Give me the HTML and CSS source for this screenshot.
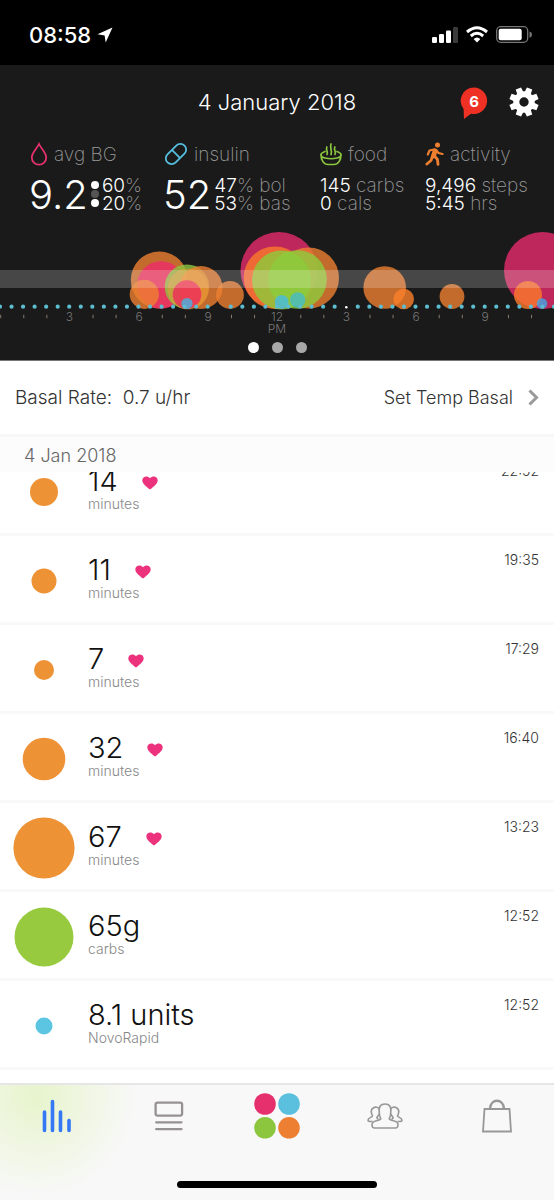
FILE: index.html
```html
<!DOCTYPE html>
<html lang="en">
<head>
<meta charset="utf-8">
<meta name="viewport" content="width=device-width, initial-scale=1">
<title>Diary</title>
<link rel="stylesheet" href="styles.css">
</head>
<body>
<div class="app">
  <div class="status">
    <div class="status-time">08:58
      <svg width="16" height="16" viewBox="0 0 16 16"><path d="M15.500.500L.5 7.300L7.600 8.400L8.700 15.500Z" fill="#fff"/></svg>
    </div>
    <div class="status-icons">
      <svg width="26" height="17" viewBox="0 0 26 17" fill="#fff"><rect x="0" y="11" width="5" height="6" rx="1.300"/><rect x="7" y="8" width="5" height="9" rx="1.300"/><rect x="14" y="4.500" width="5" height="12.500" rx="1.300"/><rect x="21" y="1" width="5" height="16" rx="1.300" fill="#3a3a3a"/></svg>
      <svg width="22" height="17" viewBox="0 0 22 17" fill="none" stroke="#fff" stroke-width="3"><path d="M1 6Q11-2.500 21 6"/><path d="M4.800 10Q11 4.600 17.200 10"/><path d="M11 16.500L7.600 13Q11 10 14.400 13Z" fill="#fff" stroke="none"/></svg>
      <svg width="36" height="17" viewBox="0 0 36 17"><rect x=".7" y=".7" width="31" height="15.600" rx="4" fill="none" stroke="#777" stroke-width="1.300"/><rect x="2.700" y="2.700" width="23" height="11.600" rx="2" fill="#fff"/><path d="M33.500 5.500Q36 6 36 8.500Q36 11 33.500 11.500Z" fill="#777"/></svg>
    </div>
  </div>

  <header class="summary">
    <div class="title-bar">
      <h1>4 January 2018</h1>
      <div class="actions">
        <button class="icon-button alerts" aria-label="6 alerts">
          <svg width="28" height="32" viewBox="0 0 28 32"><path d="M14 .5A13.300 13.300 0 1 1 11 26.800L4 32L3.600 22A13.300 13.300 0 0 1 14 .5Z" fill="#ee3124"/></svg>
          <span>6</span>
        </button>
        <button class="icon-button" aria-label="Settings">
          <svg width="30" height="30" viewBox="-15 -15 30 30"><g fill="#fff"><path id="t" d="M-3.300-9L-2.900-14.600H2.900L3.300-9Z" transform="rotate(22.500)"/><use href="#t" transform="rotate(45)"/><use href="#t" transform="rotate(90)"/><use href="#t" transform="rotate(135)"/><use href="#t" transform="rotate(180)"/><use href="#t" transform="rotate(225)"/><use href="#t" transform="rotate(270)"/><use href="#t" transform="rotate(315)"/></g><circle r="7.700" fill="none" stroke="#fff" stroke-width="6"/></svg>
        </button>
      </div>
    </div>

    <div class="stats">
      <section>
        <h2><svg width="18" height="24" viewBox="0 0 18 24"><path d="M9 2C7 6.500 1.800 10.500 1.800 15.500A7.200 7.200 0 0 0 16.200 15.500C16.200 10.500 11 6.500 9 2Z" fill="none" stroke="#e6306e" stroke-width="1.800"/></svg>avg BG</h2>
        <div class="figures">
          <strong>9.2</strong>
          <svg class="range" width="8" height="26" viewBox="0 0 8 26"><circle cx="4" cy="4" r="4" fill="#fff"/><circle cx="4" cy="13" r="4" fill="#555"/><circle cx="4" cy="22" r="4" fill="#fff"/></svg>
          <p><b>60</b>%<br><b>20</b>%</p>
        </div>
      </section>
      <section>
        <h2><svg width="24" height="24" viewBox="0 0 24 24" fill="none" stroke="#55bfdf" stroke-width="1.800"><g transform="rotate(-45 12 12)"><rect x="0" y="6.200" width="24" height="11.600" rx="5.800"/><path d="M12 6.200V17.800"/></g></svg>insulin</h2>
        <div class="figures">
          <strong>52</strong>
          <p><b>47</b>% bol<br><b>53</b>% bas</p>
        </div>
      </section>
      <section>
        <h2><svg width="22" height="24" viewBox="0 0 22 24" fill="none" stroke="#8cc63f" stroke-width="1.700" stroke-linecap="round"><path d="M5 9.500C-.5 11.500-.5 14.500 5 16C9 17 13 17 17 16C22.500 14.500 22.500 11.500 17 9.500M1.100 13C.8 18 4 22.500 8 22.500H14C18 22.500 21.200 18 20.900 13M7 12.500C8.500 10 5.500 8 6.800 5M11 12.500C12.800 9 9.300 6 11 2M15 12.500C16.500 10 13.500 8 14.800 5"/></svg>food</h2>
        <p><b>145</b> carbs<br><b>0</b> cals</p>
      </section>
      <section>
        <h2><svg width="19" height="24" viewBox="0 0 19 24" fill="none" stroke="#ee7f31" stroke-linecap="round" stroke-linejoin="round"><circle cx="12.500" cy="3" r="2.500" fill="#ee7f31" stroke="none"/><path d="M10 8.800L8.500 14" stroke-width="4.800"/><path d="M9 7.500L4.500 8.500L2.800 12.500M11.500 8.500L13.500 11L17.500 12" stroke-width="2.200"/><path d="M9.500 14L12.500 17.500L13 22.300M7.500 14L6 18.500L1.900 22" stroke-width="2.800"/></svg>activity</h2>
        <p><b>9,496</b> steps<br><b>5:45</b> hrs</p>
      </section>
    </div>

    <svg class="chart" viewBox="0 0 554 110" role="img" aria-label="Events over the day">
      <g fill-opacity=".8">
        <circle cx="159.300" cy="55" r="28.500" fill="#ee7f31"/>
        <circle cx="161" cy="60" r="23.800" fill="#ef2b6c"/>
        <circle cx="144.300" cy="69.300" r="14.600" fill="#ee7f31"/>
        <circle cx="187" cy="61.700" r="22.300" fill="#8cc63f"/>
        <circle cx="201" cy="62.500" r="21.500" fill="#ee7f31"/>
        <circle cx="188" cy="64" r="20.500" fill="#f29a37" fill-opacity=".45"/>
        <circle cx="187" cy="69.500" r="14.300" fill="#ef2b5c"/>
        <circle cx="187" cy="78.500" r="5.600" fill="#45b4e4"/>
        <circle cx="230" cy="70" r="13.900" fill="#ee7f31"/>
        <circle cx="279" cy="45.500" r="38.500" fill="#e62a6c"/>
        <circle cx="275" cy="52.700" r="31.300" fill="#fb7a2b"/>
        <circle cx="308.500" cy="53" r="30.500" fill="#ee7f31"/>
        <circle cx="281.500" cy="55" r="29.500" fill="#8ccc3c"/>
        <circle cx="297.500" cy="54.500" r="29.300" fill="#8ccc3c"/>
        <circle cx="281.700" cy="77" r="7" fill="#45bbe4"/>
        <circle cx="297.700" cy="75" r="7.700" fill="#45bbc8"/>
        <circle cx="384.700" cy="62.500" r="21.300" fill="#ee7f31"/>
        <circle cx="403.700" cy="74" r="10.300" fill="#fb7f2b"/>
        <circle cx="452" cy="71.500" r="12.400" fill="#ee7f31"/>
        <circle cx="542.500" cy="45.500" r="38.500" fill="#e62a6c"/>
        <circle cx="528" cy="70" r="14" fill="#fb7a2b"/>
        <circle cx="542" cy="78.500" r="5.300" fill="#45a4e4"/>
      </g>
      <rect y="45" width="554" height="18" fill="#fff" fill-opacity=".2"/>
      <g class="basal-dots"><path d="M0 81.700H208"/><path d="M230.800 81.700H336"/><path d="M357.800 81.700H554"/></g>
      <circle cx="346.300" cy="82.300" r="1.300" fill="#fff"/>
      <path d="M.2 91.500H554" stroke="#85796c" stroke-width="3.500" stroke-dasharray="1 22.080"/>
      <g fill="#1a1a1a"><rect x="62" y="86" width="14" height="11"/><rect x="131" y="86" width="14" height="11"/><rect x="200" y="86" width="14" height="11"/><rect x="269" y="86" width="16" height="11"/><rect x="339" y="86" width="14" height="11"/><rect x="408" y="86" width="14" height="11"/><rect x="477" y="86" width="14" height="11"/></g>
      <g class="hours"><text x="69.500" y="96">3</text><text x="139" y="96">6</text><text x="208" y="96">9</text><text x="277" y="96">12</text><text x="277" y="108">PM</text><text x="346.500" y="96">3</text><text x="416" y="96">6</text><text x="485" y="96">9</text></g>
    </svg>

    <nav class="pages" aria-label="Summary pages">
      <button class="current" aria-label="Page 1"></button><button aria-label="Page 2"></button><button aria-label="Page 3"></button>
    </nav>
  </header>

  <div class="basal">
    <span>Basal Rate:&nbsp; 0.7 u/hr</span>
    <button class="set-basal">Set Temp Basal
      <svg width="11" height="17" viewBox="0 0 11 17"><path d="M1.500 1.500L8.500 8.500L1.500 15.500" fill="none" stroke="#999" stroke-width="3"/></svg>
    </button>
  </div>
  <h3 class="day">4 Jan 2018</h3>

  <main class="feed">
    <ul>
      <li><span class="bubble"><svg width="62" height="62"><circle cx="31" cy="31" r="14"/></svg></span><div><p class="value">14 <svg class="heart" viewBox="0 0 16 14"><path d="M8 13.500C3 9.500.3 7.200.3 4.200C.3.300 5.500-1 8 2.200C10.500-1 15.700.300 15.700 4.200C15.700 7.200 13 9.500 8 13.500Z"/></svg></p><p class="unit">minutes</p></div><time>22:52</time></li>
      <li><span class="bubble"><svg width="62" height="62"><circle cx="31" cy="31" r="12.500"/></svg></span><div><p class="value">11 <svg class="heart" viewBox="0 0 16 14"><path d="M8 13.500C3 9.500.3 7.200.3 4.200C.3.300 5.500-1 8 2.200C10.500-1 15.700.300 15.700 4.200C15.700 7.200 13 9.500 8 13.500Z"/></svg></p><p class="unit">minutes</p></div><time>19:35</time></li>
      <li><span class="bubble"><svg width="62" height="62"><circle cx="31" cy="31" r="10"/></svg></span><div><p class="value">7 <svg class="heart" viewBox="0 0 16 14"><path d="M8 13.500C3 9.500.3 7.200.3 4.200C.3.300 5.500-1 8 2.200C10.500-1 15.700.300 15.700 4.200C15.700 7.200 13 9.500 8 13.500Z"/></svg></p><p class="unit">minutes</p></div><time>17:29</time></li>
      <li><span class="bubble"><svg width="62" height="62"><circle cx="31" cy="31" r="21.300"/></svg></span><div><p class="value">32 <svg class="heart" viewBox="0 0 16 14"><path d="M8 13.500C3 9.500.3 7.200.3 4.200C.3.300 5.500-1 8 2.200C10.500-1 15.700.300 15.700 4.200C15.700 7.200 13 9.500 8 13.500Z"/></svg></p><p class="unit">minutes</p></div><time>16:40</time></li>
      <li><span class="bubble"><svg width="62" height="62"><circle cx="31" cy="31" r="30.600"/></svg></span><div><p class="value">67 <svg class="heart" viewBox="0 0 16 14"><path d="M8 13.500C3 9.500.3 7.200.3 4.200C.3.300 5.500-1 8 2.200C10.500-1 15.700.300 15.700 4.200C15.700 7.200 13 9.500 8 13.500Z"/></svg></p><p class="unit">minutes</p></div><time>13:23</time></li>
      <li><span class="bubble carbs"><svg width="62" height="62"><circle cx="31" cy="31" r="29.500"/></svg></span><div><p class="value">65g</p><p class="unit">carbs</p></div><time>12:52</time></li>
      <li><span class="bubble dose"><svg width="62" height="62"><circle cx="31" cy="31" r="8.500"/></svg></span><div><p class="value">8.1 units</p><p class="unit">NovoRapid</p></div><time>12:52</time></li>
      <li><span class="bubble carbs"><svg width="62" height="62"><circle cx="31" cy="31" r="30.600"/></svg></span></li>
    </ul>
  </main>

  <footer class="tab-bar">
    <nav class="tabs" aria-label="Main">
      <button aria-label="Diary"><svg width="30" height="34" viewBox="0 0 30 34" stroke="#3478f6" stroke-width="3.600" stroke-linecap="round"><path d="M2.500 13V31.500M10.500 2.500V31.500M18.500 13V31.500M27 21.500V31.500"/></svg></button>
      <button aria-label="News"><svg width="30" height="30" viewBox="0 0 30 30" fill="none" stroke="#969192" stroke-width="2.300" stroke-linecap="round"><rect x="1.600" y="1.600" width="26.500" height="13" rx="2"/><path d="M2.200 21.300H27.500M2.200 28.200H27.500"/></svg></button>
      <button aria-label="Add entry"><svg width="46" height="46" viewBox="0 0 46 46"><circle cx="11" cy="11" r="10.800" fill="#e6306e"/><circle cx="35" cy="11" r="10.800" fill="#5bbfde"/><circle cx="11" cy="34.800" r="10.800" fill="#8cc63f"/><circle cx="35" cy="34.800" r="10.800" fill="#ed7f33"/></svg></button>
      <button aria-label="Community"><svg width="36" height="26" viewBox="0 0 36 26" fill="none" stroke="#989898" stroke-width="1.600" stroke-linejoin="round"><path d="M13.800 15.800C12.800 14 12.300 12 12.300 10C11.500 3.500 13.500 1 18 1S24.500 3.500 23.700 10C23.700 12 23.200 14 22.200 15.800C25 18.500 31 17 31 21.500C31 24.500 30 25 28.500 25H7.500C6 25 5 24.500 5 21.500C5 17 11 18.500 13.800 15.800Z"/><path d="M12.300 6.500C11.500 4 8.500 3.700 6.500 4.700C3.500 6.500 4 10 5.500 13C4.500 15 1 14.500 1 17.300Q1 19 5.500 18.300M11.300 16.500L9.800 14.700L12.300 11M23.700 6.500C24.500 4 27.500 3.700 29.500 4.700C32.500 6.500 32 10 30.500 13C31.500 15 35 14.500 35 17.300Q35 19 30.500 18.300M24.700 16.500L26.200 14.700L23.700 11"/></svg></button>
      <button aria-label="Shop"><svg width="30" height="34" viewBox="0 0 30 34" fill="none" stroke="#989898" stroke-width="1.800"><path d="M2.500 10H27.500L29 32.500H1Z"/><path d="M8 10C8.500-1 21.500-1 22 10" stroke-width="2.600"/></svg></button>
    </nav>
    <div class="home-indicator"></div>
  </footer>
</div>
</body>
</html>
```
FILE: styles.css
```css
* { box-sizing: border-box; }
body, h1, h2, h3, p, ul { margin: 0; padding: 0; }
body { font-family: Inter, "Liberation Sans", sans-serif; font-weight: 300; color: #333; background: #fff; }
button { border: 0; padding: 0; background: none; font: inherit; color: inherit; }
svg { display: block; flex: none; }

.app { display: flex; flex-direction: column; height: 100vh; overflow: hidden; }

.status { display: flex; justify-content: space-between; align-items: center; height: 65px; padding: 4px 22px 0 29px; background: #000; color: #fff; }
.status-time { display: flex; align-items: center; gap: 6px; font-size: 22px; font-weight: 500; }
.status-icons { display: flex; gap: 8px; }

.summary { display: flex; flex-direction: column; height: 296px; background: #1a1a1a; border-bottom: 1px solid #777; color: #999; }
.title-bar { display: grid; grid-template-columns: 1fr auto 1fr; align-items: center; padding: 20px 15px 0; }
.title-bar h1 { grid-column: 2; font-size: 22px; line-height: 34px; font-weight: 300; color: #fff; }
.actions { display: flex; justify-content: flex-end; align-items: center; gap: 21px; }
.alerts { display: grid; padding-top: 2px; }
.alerts > * { grid-area: 1 / 1; }
.alerts span { font-size: 15px; line-height: 30px; font-weight: 700; color: #fff; }

.stats { display: grid; grid-template-columns: 134fr 156fr 105fr 129fr; padding: 23px 0 0 30px; white-space: nowrap; }
.stats h2 { display: flex; align-items: center; gap: 6px; height: 24px; font-size: 19px; font-weight: 200; }
.stats p { padding-top: 11px; font-size: 19px; line-height: 18px; font-weight: 200; }
.stats b { font-weight: 300; color: #fff; }
.figures { display: flex; gap: 3px; }
.figures strong { margin-left: -1px; padding-top: 11px; font-size: 40px; line-height: 36px; font-weight: 300; color: #fff; }
.range { margin-top: 15px; }

.chart { width: 100%; height: auto; margin-top: 12px; }
.basal-dots { fill: none; stroke: #5cbcd0; stroke-width: 4.2px; stroke-linecap: round; stroke-dasharray: 0 11.54; }
.hours { fill: #777; font-size: 12px; text-anchor: middle; }
.pages { display: flex; justify-content: center; gap: 13px; padding-top: 7px; }
.pages button { width: 11px; height: 11px; border-radius: 50%; background: #a8a8a8; }
.pages .current { background: #fff; }

.basal { display: flex; justify-content: space-between; align-items: center; height: 76px; padding: 0 15px; border-bottom: 3px solid #f7f7f7; font-size: 19px; }
.set-basal { display: flex; align-items: center; gap: 15px; font-size: 18px; }
.day { height: 35px; padding-left: 24px; background: #fcfcfc; font-size: 18px; line-height: 37px; font-weight: 300; color: #666; }

.feed { flex: 1; min-height: 0; overflow: hidden; }
.feed ul { margin-top: -25px; list-style: none; }
.feed li { display: grid; grid-template-columns: 62px 1fr auto; column-gap: 13px; height: 89px; padding: 0 15px 0 13px; border-bottom: 3px solid #f9f9f9; }
.bubble { padding-top: 14px; fill: #ee9236; }
.bubble.carbs { fill: #98ca3f; }
.bubble.dose { fill: #5bc5e2; }
.value { display: flex; align-items: center; gap: 24px; padding-top: 18px; font-size: 29px; line-height: 32px; font-weight: 300; color: #111; }
.heart { width: 16px; height: 14px; margin-top: 4px; fill: #ec327c; }
.unit { font-size: 14px; line-height: 14px; font-weight: 300; color: #888; }
.feed time { padding-top: 16px; font-size: 14px; line-height: 16px; font-weight: 300; color: #333; }

.tab-bar { display: flex; flex-direction: column; align-items: center; justify-content: space-between; height: 117px; padding-bottom: 12px; border-top: 2px solid #e6e6e6; background: radial-gradient(circle at 36px 12px, #e7f4cc 0, rgba(231, 244, 204, 0) 100px), #f8f8f8; }
.tabs { display: grid; grid-template-columns: 114fr 110fr 106fr 110fr 114fr; align-items: center; width: 100%; padding-top: 8px; }
.tabs button { display: grid; place-items: center; }
.home-indicator { width: 36%; height: 7px; border-radius: 4px; background: #000; }
```
